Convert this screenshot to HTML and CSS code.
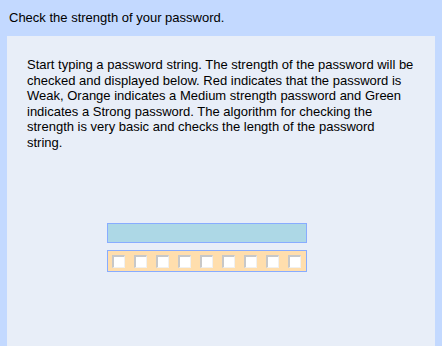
FILE: index.html
```html
<!DOCTYPE html>
<html>
<head>
<meta charset="utf-8">
<link rel="stylesheet" href="styles.css">
</head>
<body>
<div class="header">Check the strength of your password.</div>
<div class="panel">
  <p class="intro">Start typing a password string. The strength of the password will be checked and displayed below. Red indicates that the password is Weak, Orange indicates a Medium strength password and Green indicates a Strong password. The algorithm for checking the strength is very basic and checks the length of the password<br>string.</p>
  <div class="checker">
    <input class="pw" type="password">
    <div class="meter">
      <span class="cell"></span><span class="cell"></span><span class="cell"></span><span class="cell"></span><span class="cell"></span><span class="cell"></span><span class="cell"></span><span class="cell"></span><span class="cell"></span>
    </div>
  </div>
</div>
</body>
</html>
```
FILE: styles.css
```css
html, body {
  margin: 0;
  padding: 0;
  height: 100%;
}
body {
  background: #c3d9ff;
  font-family: "Liberation Sans", Arial, sans-serif;
  font-size: 13px;
  color: #000;
  display: flex;
  flex-direction: column;
  overflow: hidden;
}
.header {
  padding: 10px 9px 11px;
  line-height: 15px;
  height: 15px;
}
.panel {
  flex: 1;
  margin: 0 7px;
  background: #e8eef8;
  padding: 21px 16px 0 20px;
}
.intro {
  margin: 0;
  line-height: 15.6px;
}
.checker {
  margin: 72px 0 0 80px;
  width: 200px;
  display: flex;
  flex-direction: column;
  gap: 7px;
}
.pw {
  box-sizing: border-box;
  width: 200px;
  height: 20px;
  margin: 0;
  padding: 0;
  border: 1px solid #88acff;
  background: #add8e6;
  outline: none;
}
.meter {
  box-sizing: border-box;
  width: 200px;
  height: 22px;
  border: 1px solid #88acff;
  background: #ffdead;
  display: flex;
  gap: 9px;
  padding: 3px 4px 0;
  align-items: flex-start;
}
.cell {
  box-sizing: border-box;
  width: 13px;
  height: 13px;
  margin-top: 1px;
  background: #fff;
  border-style: solid;
  border-width: 2px 1px 1px 2px;
  border-color: #c8c8c8 #f0f0f0 #f0f0f0 #c8c8c8;
}
```
